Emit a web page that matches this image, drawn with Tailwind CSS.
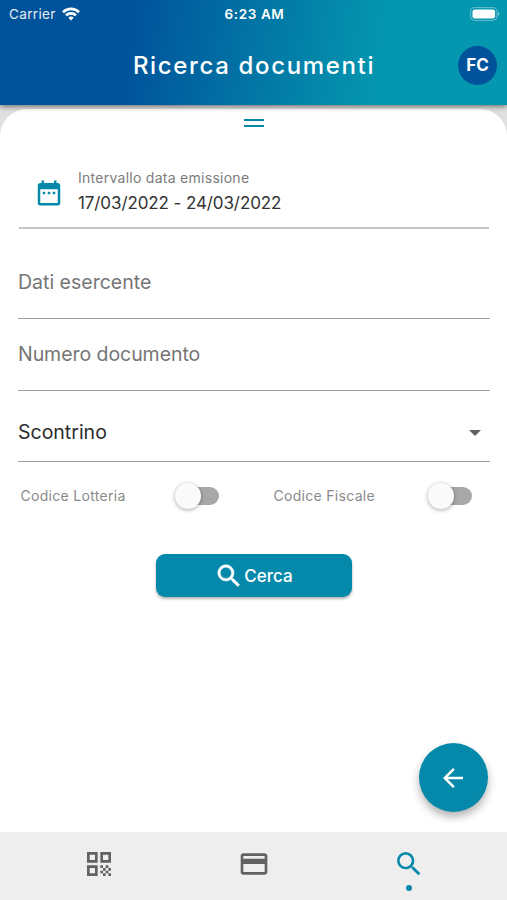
<!DOCTYPE html>
<html lang="it">
  <head>
    <meta charset="UTF-8" />
    <title>Ricerca documenti</title>
    <meta name="viewport" content="width=device-width, initial-scale=1.0" />
    <script src="https://cdn.jsdelivr.net/npm/@tailwindcss/browser@4"></script>
  </head>
  <body
    class="bg-[#e0e0e0] h-[900px] w-[507px] overflow-hidden flex flex-col font-['Inter','Liberation_Sans',sans-serif]"
  >
    <!-- Header -->
    <header
      class="relative z-10 h-[105px] shrink-0 text-white bg-[linear-gradient(98deg,#00529b_25%,#0497af_75%)] shadow-[0_1px_6px_rgba(0,0,0,0.6)]"
    >
      <div class="grid grid-cols-3 items-center h-[27px] pl-[9px] pr-[7px]">
        <div class="flex items-center gap-[6px]">
          <span class="pt-px text-[13.5px] tracking-[0.35px] text-white/90">Carrier</span>
          <svg class="w-[18px] h-[14px]" viewBox="0 0 18 14" fill="none" stroke="white" stroke-width="2.6">
            <path d="M1 5.2a11.4 11.4 0 0 1 16 0" />
            <path d="M4 8.4a7.1 7.1 0 0 1 10 0" />
            <path d="M6.3 10.8a3.8 3.8 0 0 1 5.4 0L9 13.6z" fill="white" stroke="none" />
          </svg>
        </div>
        <div class="pt-px text-center text-[13.5px] font-semibold tracking-[0.6px]">6:23 AM</div>
        <svg class="w-[30px] h-[14px] justify-self-end" viewBox="0 0 30 14">
          <rect x="0.6" y="0.6" width="26.4" height="12.8" rx="4" fill="none" stroke="white" stroke-opacity="0.4" />
          <rect x="2.5" y="2.5" width="22.6" height="9" rx="2.2" fill="white" />
          <path d="M28 4.8v4.4c1.6-.6 1.6-3.8 0-4.4z" fill="white" fill-opacity="0.5" />
        </svg>
      </div>
      <div class="grid grid-cols-[60px_1fr_60px] items-center h-[76px]">
        <h1 class="col-start-2 pl-px pt-px text-center text-[24px] font-medium tracking-[1.65px] whitespace-nowrap">Ricerca documenti</h1>
        <div class="w-[39px] h-[39px] ml-[11px] pt-px rounded-full bg-[#00529b] flex items-center justify-center text-[17px] font-bold">FC</div>
      </div>
    </header>

    <!-- Search sheet -->
    <main class="relative mt-[4px] flex-1 bg-white rounded-t-[27px] pl-[18px] pr-[17px]">
      <div class="mx-auto mt-[10px] w-5 h-[8px] border-y-2 border-[#0589ab]"></div>

      <div class="mx-px mt-[33px] h-[69px] flex border-b-2 border-[#c4c4c4]">
        <svg class="ml-[14.5px] mt-[17.5px] w-[30px] h-[30px] fill-[#0589ab]" viewBox="0 0 24 24">
          <path d="M9 11H7v2h2v-2zm4 0h-2v2h2v-2zm4 0h-2v2h2v-2zm2-7h-1V2h-2v2H8V2H6v2H5c-1.11 0-1.99.9-1.99 2L3 20a2 2 0 0 0 2 2h14c1.1 0 2-.9 2-2V6c0-1.1-.9-2-2-2zm0 16H5V9h14v11z" />
        </svg>
        <div class="ml-[14.5px] mt-[8px]">
          <div class="text-[14px] leading-5 tracking-[0.27px] text-[#7c7c7c]">Intervallo data emissione</div>
          <div class="mt-[3px] text-[17px] leading-6 tracking-[-0.1px] text-[#333]">17/03/2022 - 24/03/2022</div>
        </div>
      </div>

      <div class="mt-[36px] h-[54px] border-b border-[#9e9e9e] text-[19.5px] leading-[34px] text-[#757575]">Dati esercente</div>
      <div class="mt-[18px] h-[54px] border-b border-[#9e9e9e] text-[19.5px] leading-[34px] tracking-[-0.05px] text-[#757575]">Numero documento</div>
      <div class="mt-[24px] h-[47px] border-b border-[#9e9e9e] flex justify-between text-[19.5px] leading-[34px] text-[#2b2b2b]">
        <span>Scontrino</span>
        <svg class="mt-[15px] mr-[9px] w-3 h-[6px] fill-[#616161]" viewBox="0 0 12 6"><path d="M0 0h12L6 6z" /></svg>
      </div>

      <div class="grid grid-cols-[253px_1fr] mt-[20px] text-[14px] tracking-[0.3px] text-[#8a8a8a]">
        <div class="flex items-center h-[28px] pl-[2.5px]">
          <span class="w-[154px] pb-[2px]">Codice Lotteria</span>
          <div class="relative w-[44px] h-[18px] rounded-full bg-[#a8a8a8] border-l-[16px] border-white">
            <div class="absolute -left-[16px] -top-[4px] w-[26px] h-[26px] rounded-full bg-[#fafafa] shadow-[0_1px_4px_rgba(0,0,0,0.35)]"></div>
          </div>
        </div>
        <div class="flex items-center h-[28px] pl-[2.5px]">
          <span class="w-[154px] pb-[2px]">Codice Fiscale</span>
          <div class="relative w-[44px] h-[18px] rounded-full bg-[#a8a8a8] border-l-[16px] border-white">
            <div class="absolute -left-[16px] -top-[4px] w-[26px] h-[26px] rounded-full bg-[#fafafa] shadow-[0_1px_4px_rgba(0,0,0,0.35)]"></div>
          </div>
        </div>
      </div>

      <button
        class="mx-auto mt-[44px] w-[196px] h-[43px] pr-px rounded-[9px] bg-[#0589ab] text-white flex items-center justify-center shadow-[0_2px_3px_rgba(0,0,0,0.3)]"
      >
        <svg class="w-[30px] h-[30px] fill-white stroke-white stroke-[0.4]" viewBox="0 0 24 24">
          <path d="M15.5 14h-.79l-.28-.27A6.471 6.471 0 0 0 16 9.5 6.5 6.5 0 1 0 9.5 16c1.61 0 3.09-.59 4.23-1.57l.27.28v.79l5 4.99L20.49 19l-4.99-5zm-6 0C7.01 14 5 11.99 5 9.5S7.01 5 9.5 5 14 7.01 14 9.5 11.99 14 9.5 14z" />
        </svg>
        <span class="pt-[2px] text-[17px] font-medium">Cerca</span>
      </button>

      <!-- Back button -->
      <button
        class="absolute right-[19px] bottom-[20px] w-[69px] h-[69px] rounded-full bg-[#0589ab] flex items-center justify-center shadow-[0_5px_9px_rgba(0,0,0,0.3)]"
      >
        <svg class="w-[30px] h-[30px] mr-px fill-white" viewBox="0 0 24 24">
          <path d="M20 11H7.83l5.59-5.59L12 4l-8 8 8 8 1.41-1.41L7.83 13H20v-2z" />
        </svg>
      </button>
    </main>

    <!-- Bottom navigation -->
    <nav class="h-[68px] shrink-0 bg-[#eee] grid grid-cols-[155px_155px_155px] justify-center pt-[16px] fill-[#616161]">
      <div class="flex flex-col items-center">
        <svg class="w-[32px] h-[32px]" viewBox="0 0 24 24">
          <path d="M3 11h8V3H3v8zm2-6h4v4H5V5zM3 21h8v-8H3v8zm2-6h4v4H5v-4zM13 3v8h8V3h-8zm6 6h-4V5h4v4zM19 19h2v2h-2zM13 13h2v2h-2zM15 15h2v2h-2zM13 17h2v2h-2zM15 19h2v2h-2zM17 17h2v2h-2zM17 13h2v2h-2zM19 15h2v2h-2z" />
        </svg>
      </div>
      <div class="flex flex-col items-center">
        <svg class="w-[32px] h-[32px]" viewBox="0 0 24 24">
          <path d="M20 4H4c-1.11 0-1.99.89-1.99 2L2 18c0 1.11.89 2 2 2h16c1.11 0 2-.89 2-2V6c0-1.11-.89-2-2-2zm0 14H4v-6h16v6zm0-10H4V6h16v2z" />
        </svg>
      </div>
      <div class="flex flex-col items-center">
        <svg class="w-[32px] h-[32px] fill-[#0589ab]" viewBox="0 0 24 24">
          <path d="M15.5 14h-.79l-.28-.27A6.471 6.471 0 0 0 16 9.5 6.5 6.5 0 1 0 9.5 16c1.61 0 3.09-.59 4.23-1.57l.27.28v.79l5 4.99L20.49 19l-4.99-5zm-6 0C7.01 14 5 11.99 5 9.5S7.01 5 9.5 5 14 7.01 14 9.5 11.99 14 9.5 14z" />
        </svg>
        <span class="mt-[5px] w-[6px] h-[6px] rounded-full bg-[#0589ab]"></span>
      </div>
    </nav>
  </body>
</html>
